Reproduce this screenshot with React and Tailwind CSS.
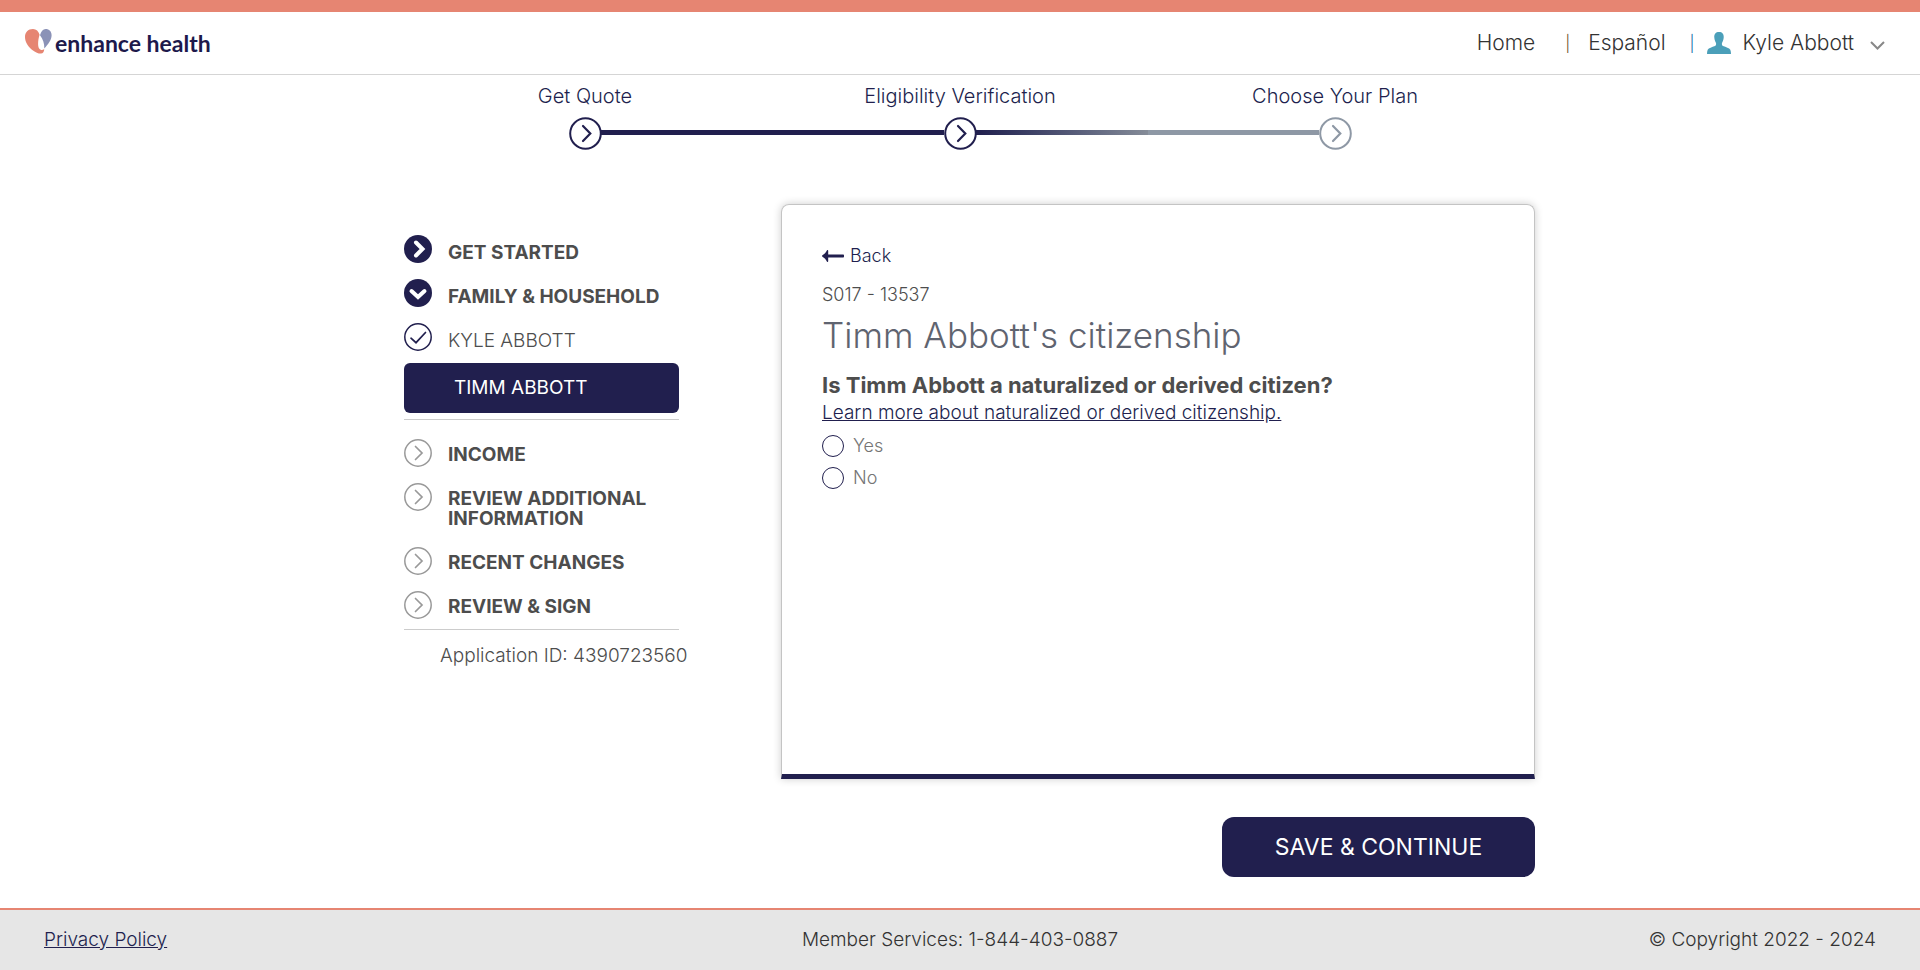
import React from "react";

function Circle({ kind, className = "size-7" }) {
  const filled = kind === "open" || kind === "done";
  const paths = {
    done: "M12 7.5 18.500 14 12 20.5",
    open: "M7.500 12 14 18 20.500 12",
    check: "M7 15.200 12 19.700 21.5 9.5",
    todo: "M11.5 7.5 18 14 11.5 20.5",
  };
  const tone = kind === "todo" ? "text-[#999999]" : "text-[#211f4e]";
  return (
    <svg viewBox="0 0 28 28" fill="none" aria-hidden="true" className={`shrink-0 ${tone} ${className}`}>
      <circle cx="14" cy="14" r={filled ? 14 : 13.2} fill={filled ? "currentColor" : "none"} stroke={filled ? "none" : "currentColor"} strokeWidth="1.5" />
      <path
        d={paths[kind]}
        stroke={filled ? "#fff" : "currentColor"}
        strokeWidth={filled ? 4 : 1.7}
        strokeLinecap="round"
        strokeLinejoin="miter"
      />
    </svg>
  );
}

function StepIcon({ tone }) {
  return (
    <svg viewBox="0 0 33 33" fill="none" stroke="currentColor" aria-hidden="true" className={`size-[33px] ${tone}`}>
      <circle cx="16.5" cy="16.5" r="15.3" strokeWidth="2" />
      <path d="M14 9 21.3 16.5 14 24" strokeWidth="2.2" strokeLinecap="round" />
    </svg>
  );
}

function Step({ label, tone, children }) {
  return (
    <li className="relative flex flex-1 flex-col items-center">
      <span className="text-xl leading-6 text-[#211f4e]">{label}</span>
      <span className="mt-[9px]">
        <StepIcon tone={tone} />
      </span>
      {children}
    </li>
  );
}

function NavRow({ kind, label, text = "pt-1.5 font-bold", className = "pb-4" }) {
  return (
    <li className={className}>
      <a href="#" className="flex items-start gap-4">
        <Circle kind={kind} />
        <span className={`leading-5 ${text}`}>{label}</span>
      </a>
    </li>
  );
}

function Logo() {
  return (
    <a href="#" className="flex items-start gap-[3px]">
      <svg viewBox="0 0 27 25" aria-hidden="true" className="h-[25px] w-[27px]">
        <path
          d="M8 0C3 0 0 3.400 0 8c0 5.500 3.500 10.300 8 13.500 2.800 2 5.700 3.300 8 3.100 2-.2 3.300-1.900 3.200-4.600-1 .8-2.300 1.200-3.500.7-1.800-.7-2.600-2.700-2.600-5.700 0-3.200.5-6.500 1.500-9.200C13.600 2.300 11.300 0 8 0Z"
          fill="#e68572"
        />
        <path d="M20.600 0c3.600 0 6 2.500 6 6.200 0 4.900-3.500 8.800-7.300 13.300.2-5.300-1.300-9.300-4.300-13.300C16 2.400 17.900 0 20.600 0Z" fill="#8b92b7" />
      </svg>
      <span className="font-[Lato] text-[23px] leading-7 font-bold text-[#1d194b]">enhance health</span>
    </a>
  );
}

function Choice({ id, label }) {
  return (
    <div className="flex h-8 items-center gap-[9px]">
      <input
        id={id}
        type="radio"
        name="citizen"
        className="size-[22px] appearance-none rounded-full border border-[#211f4e] checked:border-[7px]"
      />
      <label htmlFor={id} className="text-lg text-[#757575]">
        {label}
      </label>
    </div>
  );
}

export default function App() {
  return (
    <div className="flex min-h-screen flex-col bg-white font-[Inter,sans-serif] text-[19px] font-light text-[#4d4d4d]">
      <header className="flex h-[75px] items-center justify-between border-t-12 border-b border-t-[#e68572] border-b-[#d5d5d5] pr-[35px] pl-[25px]">
        <Logo />
        <nav className="flex items-center text-[21px] text-[#333]">
          <a href="#">Home</a>
          <span className="ml-[30px] text-base text-[#6b551d]">|</span>
          <a href="#" className="ml-[18px]">Español</a>
          <span className="ml-6 text-base text-[#0b6fa5]">|</span>
          <button type="button" className="ml-3 flex items-center">
            <svg viewBox="0 0 24 22" aria-hidden="true" className="h-[22px] w-6" fill="#4b9fb9">
              <path d="M12 0C8.800 0 7 2 7.300 5.500c.2 2.500.9 4 1.600 5.200.5 1.200.2 2.700-.9 3.300C5 15.300 1.800 15.800.7 17.800.2 18.900 0 20.300 0 22h24c0-1.700-.2-3.100-.7-4.200-1.100-2-4.300-2.500-7.300-3.800-1.100-.6-1.400-2.100-.9-3.300.7-1.200 1.400-2.700 1.600-5.200C17 2 15.200 0 12 0Z" />
            </svg>
            <span className="ml-3">Kyle Abbott</span>
            <svg viewBox="0 0 15 9" fill="none" aria-hidden="true" className="mt-1 ml-4 h-[9px] w-[15px]">
              <path d="M1 1l6.500 6.500L14 1" stroke="#888" strokeWidth="2" />
            </svg>
          </button>
        </nav>
      </header>

      <main>
        <ol className="mx-auto flex w-full max-w-[1125px] pt-[9px]">
          <Step label="Get Quote" tone="text-[#211f4e]" />
          <Step label="Eligibility Verification" tone="text-[#211f4e]">
            <span className="absolute top-[46px] right-1/2 left-[-50%] mr-4 ml-4 h-[5px] bg-[#211f4e]" />
          </Step>
          <Step label="Choose Your Plan" tone="text-[#8e98a5]">
            <span className="absolute top-[46px] right-1/2 left-[-50%] mr-4 ml-4 flex h-[5px]">
              <span className="flex-1 bg-linear-to-r from-[#211f4e] to-[#858c98]" />
              <span className="flex-1 bg-[#8e98a5]" />
            </span>
          </Step>
        </ol>

        <div className="mx-auto flex max-w-[1150px] items-start gap-[102px] pt-[54px] pl-[19px]">
          <aside className="w-[275px] shrink-0 pt-[31px]">
            <ul className="border-b border-[#ccc] pb-1.5">
              <NavRow kind="done" label="GET STARTED" text="pt-2 font-bold" />
              <NavRow kind="open" label="FAMILY & HOUSEHOLD" text="pt-2 font-bold" />
              <NavRow kind="check" label="KYLE ABBOTT" text="pt-2" className="pb-3" />
              <li>
                <a href="#" className="flex h-[50px] items-center rounded-md bg-[#211f4e] pl-[50px] font-normal text-white">
                  TIMM ABBOTT
                </a>
              </li>
            </ul>
            <ul className="border-b border-[#ccc] pt-[19px]">
              <NavRow kind="todo" label="INCOME" />
              <NavRow kind="todo" label="REVIEW ADDITIONAL INFORMATION" className="pb-[18px]" />
              <NavRow kind="todo" label="RECENT CHANGES" />
              <NavRow kind="todo" label="REVIEW & SIGN" className="pb-2.5" />
            </ul>
            <p className="mt-4 pl-9 leading-5 whitespace-nowrap">Application ID: 4390723560</p>
          </aside>

          <div className="flex min-w-0 flex-1 flex-col">
            <section className="min-h-[575px] rounded-t-lg border border-b-5 border-[#c4c4c4] border-b-[#211f4e] px-10 pt-[39px] shadow-[0_0_8px_rgba(0,0,0,0.2)]">
              <button type="button" className="flex h-6 items-center gap-1.5 text-lg text-[#211f4e]">
                <svg viewBox="0 0 22 12" aria-hidden="true" className="h-3 w-[22px]" fill="#211f4e">
                  <path d="M.4 5.300C2.400 4.200 4 2.400 5 .3c.4-.5 1.200-.3 1.200.4v3.900H21c.6 0 1 .4 1 1v.8c0 .6-.4 1-1 1H6.200v3.900c0 .7-.8.900-1.200.4C4 9.600 2.400 7.800.4 6.700c-.5-.4-.5-1 0-1.400Z" />
                </svg>
                Back
              </button>
              <p className="mt-[15px] text-lg leading-6">S017 - 13537</p>
              <h1 className="mt-2 text-[35px] leading-10 text-[#5f6470]">Timm Abbott's citizenship</h1>
              <h2 className="mt-4 text-[22px] leading-7 font-bold">Is Timm Abbott a naturalized or derived citizen?</h2>
              <a href="#" className="mt-0.5 block leading-6 text-[#211f4e] underline">
                Learn more about naturalized or derived citizenship.
              </a>
              <fieldset className="mt-[5px]">
                <Choice id="yes" label="Yes" />
                <Choice id="no" label="No" />
              </fieldset>
            </section>
            <button type="button" className="mt-[38px] h-[60px] w-[313px] self-end rounded-xl bg-[#211f4e] text-[23px] font-normal text-white">
              SAVE &amp; CONTINUE
            </button>
          </div>
        </div>
      </main>

      <footer className="mt-auto grid h-[62px] grid-cols-3 items-center border-t-2 border-[#e68572] bg-[#e6e6e6] px-11 text-[#333]">
        <a href="#" className="justify-self-start text-[#211f4e] underline">Privacy Policy</a>
        <p className="text-center">Member Services: 1-844-403-0887</p>
        <p className="text-right">© Copyright 2022 - 2024</p>
      </footer>
    </div>
  );
}
